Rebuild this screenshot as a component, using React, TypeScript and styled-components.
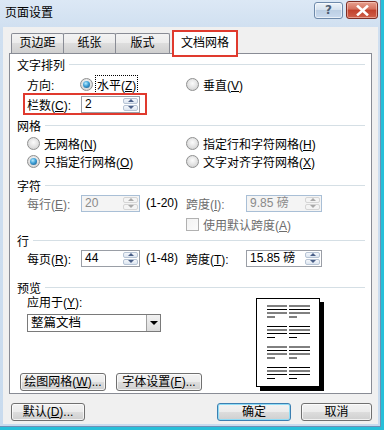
import React from 'react';
import styled, { createGlobalStyle } from 'styled-components';

const GlobalStyle = createGlobalStyle`
    body {
        margin: 0;
        background: #27bfd9;
        font-family: "Liberation Sans", "Noto Sans CJK SC", sans-serif;
        font-size: 12px;
        color: #000;
    }
`;

export default function App() {
    return (<>
        <GlobalStyle />
        <Window>
            <TitleBar>
                <Title>页面设置</Title>
                <Caption>
                    <HelpButton>?</HelpButton>
                    <CloseButton>
                        <svg width="13" height="11" viewBox="0 0 13 11">
                            <path d="M2 1.5 L11 9.5 M11 1.5 L2 9.5" stroke="#fff" strokeWidth="2.6" strokeLinecap="square" />
                        </svg>
                    </CloseButton>
                </Caption>
            </TitleBar>

            <Client>
                <TabRow>
                    <Tab $w={53}>页边距</Tab>
                    <Tab $w={53}>纸张</Tab>
                    <Tab $w={55}>版式</Tab>
                    <ActiveTab>文档网格</ActiveTab>
                </TabRow>

                <Panel>
                    <Header $mt={2}>文字排列</Header>
                    <Rows>
                        <Row $mt={3}>
                            <Label>方向:</Label>
                            <Span2><Radio $checked /><Focus>水平(<u>Z</u>)</Focus></Span2>
                            <Right><Radio /><span>垂直(<u>V</u>)</span></Right>
                        </Row>
                        <Marked>
                            <Label>栏数(<u>C</u>):</Label>
                            <SpinBox value="2" />
                        </Marked>
                    </Rows>

                    <Header $mt={2}>网格</Header>
                    <Rows>
                        <Row $mt={1}>
                            <Left><Radio /><span>无网格(<u>N</u>)</span></Left>
                            <Right><Radio /><span>指定行和字符网格(<u>H</u>)</span></Right>
                        </Row>
                        <Row>
                            <Left><Radio $checked /><span>只指定行网格(<u>O</u>)</span></Left>
                            <Right><Radio /><span>文字对齐字符网格(<u>X</u>)</span></Right>
                        </Row>
                    </Rows>

                    <Header $mt={7}>字符</Header>
                    <Rows>
                        <Row $mt={1}>
                            <Label $off>每行(<u>E</u>):</Label>
                            <SpinBox value="20" disabled />
                            <Range>(1-20)</Range>
                            <Label $off>跨度(<u>I</u>):</Label>
                            <SpinBox value="9.85 磅" disabled wide />
                        </Row>
                        <CheckRow>
                            <Right $off><Check /><span>使用默认跨度(<u>A</u>)</span></Right>
                        </CheckRow>
                    </Rows>

                    <Header $mt={0}>行</Header>
                    <Rows>
                        <Row $mt={1}>
                            <Label>每页(<u>R</u>):</Label>
                            <SpinBox value="44" />
                            <Range>(1-48)</Range>
                            <Label>跨度(<u>T</u>):</Label>
                            <SpinBox value="15.85 磅" wide />
                        </Row>
                    </Rows>

                    <Header $mt={12}>预览</Header>
                    <PreviewBody>
                        <PreviewLeft>
                            <ApplyLabel>应用于(<u>Y</u>):</ApplyLabel>
                            <Select>
                                <SelectText>整篇文档</SelectText>
                                <DropButton><DownArrow /></DropButton>
                            </Select>
                            <PanelButtons>
                                <Button $w={86}>绘图网格(<u>W</u>)...</Button>
                                <Button $w={86}>字体设置(<u>F</u>)...</Button>
                            </PanelButtons>
                        </PreviewLeft>
                        <PagePreview />
                    </PreviewBody>
                </Panel>

                <Footer>
                    <Button $w={74}>默认(<u>D</u>)...</Button>
                    <FooterRight>
                        <Button $w={74} $default>确定</Button>
                        <Button $w={71}>取消</Button>
                    </FooterRight>
                </Footer>
            </Client>
        </Window>
    </>);
}

function SpinBox({ value, disabled, wide }: { value: string; disabled?: boolean; wide?: boolean }) {
    return (<Input $off={disabled} $w={wide ? 76 : 59}>
        <InputText>{value}</InputText>
        <Spin>
            <SpinHalf $off={disabled}><Tri $up $off={disabled} /></SpinHalf>
            <SpinHalf $off={disabled}><Tri $off={disabled} /></SpinHalf>
        </Spin>
    </Input>);
}

function PagePreview() {
    const groups = [8, 28.5, 49, 69.5];
    const lines: React.ReactNode[] = [];
    groups.forEach((g, i) => {
        [0, 3.5, 7].forEach((d, j) => {
            lines.push(<line key={`a${i}${j}`} x1="11" x2="31" y1={g + d} y2={g + d} />);
            lines.push(<line key={`b${i}${j}`} x1="33" x2="54" y1={g + d} y2={g + d} />);
        });
        lines.push(<line key={`c${i}`} x1="11" x2="19" y1={g + 11} y2={g + 11} />);
        lines.push(<line key={`d${i}`} x1="33" x2="41" y1={g + 11} y2={g + 11} />);
    });
    return (<PageSvg width="68" height="93" viewBox="0 0 68 93">
        <rect x="4" y="4" width="64" height="89" fill="#000" />
        <rect x="0.5" y="0.5" width="63" height="88" fill="#fff" stroke="#000" />
        <g stroke="#000" strokeWidth="1">{lines}</g>
    </PageSvg>);
}

const Window = styled.div`
    width: 381px;
    height: 427px;
    display: flex;
    flex-direction: column;
    background: linear-gradient(#dce8f5, #cfdff0 30px, #c9dbee);
    box-shadow: inset -1px -1px 0 #6f8fb5;
    box-sizing: border-box;
`;

const TitleBar = styled.div`
    height: 27px;
    display: flex;
    justify-content: space-between;
    align-items: flex-start;
    padding: 0 3px 0 5px;
    flex-shrink: 0;
`;

const Title = styled.div`
    margin-top: 5px;
    font-size: 12px;
    line-height: 16px;
`;

const Caption = styled.div`
    display: flex;
    gap: 3px;
    margin-top: 1px;
`;

const HelpButton = styled.div`
    width: 29px;
    height: 17px;
    margin-top: 1px;
    box-sizing: border-box;
    border: 1px solid #6e8aab;
    border-radius: 3px;
    background: linear-gradient(#eef3f9, #d6e2ef 45%, #bccfe4 50%, #c9daee);
    box-shadow: inset 0 0 0 1px rgba(255,255,255,0.6);
    color: #4f5f73;
    font-family: "DejaVu Sans", sans-serif;
    font-weight: bold;
    font-size: 12px;
    line-height: 15px;
    text-align: center;
`;

const CloseButton = styled.div`
    width: 32px;
    height: 18px;
    box-sizing: border-box;
    border: 1px solid #7d2d24;
    border-radius: 3px;
    background: linear-gradient(#e7a08f, #d4705d 45%, #c1402b 50%, #d0604a);
    box-shadow: inset 0 0 0 1px rgba(255,220,210,0.5);
    display: flex;
    align-items: center;
    justify-content: center;
`;

const Client = styled.div`
    flex: 1;
    margin: 0 3px 3px 3px;
    background: #f0f0f0;
    display: flex;
    flex-direction: column;
    padding: 3px 6px 0 6px;
`;

const TabRow = styled.div`
    display: flex;
    align-items: flex-end;
    padding-left: 2px;
    height: 23px;
`;

const Tab = styled.div<{ $w: number }>`
    width: ${p => p.$w}px;
    height: 20px;
    margin-right: -1px;
    box-sizing: border-box;
    border: 1px solid #898c95;
    border-bottom: none;
    border-radius: 2px 2px 0 0;
    background: linear-gradient(#f3f3f3, #ebebeb 50%, #dddddd 50%, #cfcfcf);
    text-align: center;
    line-height: 19px;
`;

const ActiveTab = styled.div`
    position: relative;
    z-index: 1;
    width: 66px;
    height: 27px;
    margin-left: 3px;
    margin-bottom: -4px;
    box-sizing: border-box;
    border: 2px solid #e03a2e;
    background: #fff;
    font-size: 12px;
    line-height: 22px;
    text-align: center;
`;

const Panel = styled.div`
    flex-shrink: 0;
    height: 341px;
    box-sizing: border-box;
    border: 1px solid #898c95;
    background: #fff;
    padding: 0 6px 6px 7px;
    display: flex;
    flex-direction: column;
`;

const Header = styled.div<{ $mt: number }>`
    display: flex;
    align-items: center;
    gap: 4px;
    height: 16px;
    margin-top: ${p => p.$mt}px;
    &::after {
        content: '';
        flex: 1;
        height: 1px;
        background: #d5dfe5;
    }
`;

const Rows = styled.div`
    display: flex;
    flex-direction: column;
    padding-left: 10px;
`;

const Row = styled.div<{ $mt?: number }>`
    display: grid;
    grid-template-columns: 54px 65px 40px 60px 76px;
    align-items: center;
    height: 18px;
    margin-top: ${p => p.$mt ?? 0}px;
`;

const CheckRow = styled(Row)`
    height: 16px;
    margin-top: 4px;
`;

const Marked = styled.div`
    display: grid;
    grid-template-columns: 54px 59px;
    align-items: center;
    align-self: flex-start;
    height: 18px;
    margin-left: -4px;
    padding: 0 5px 0 2px;
    border: 2px solid #e03a2e;
`;

const Label = styled.div<{ $off?: boolean }>`
    color: ${p => p.$off ? '#6d6d6d' : '#000'};
    white-space: nowrap;
`;

const Range = styled.div`
    white-space: nowrap;
`;

const Choice = styled.div<{ $off?: boolean }>`
    display: flex;
    align-items: center;
    gap: 4px;
    white-space: nowrap;
    color: ${p => p.$off ? '#6d6d6d' : '#000'};
`;

const Left = styled(Choice)`
    grid-column: 1 / span 3;
`;

const Span2 = styled(Choice)`
    grid-column: 2 / span 2;
    margin-left: -1px;
    gap: 3px;
`;

const Right = styled(Choice)`
    grid-column: 4 / span 2;
`;

const Focus = styled.span`
    outline: 1px dotted #000;
    padding: 0 1px;
`;

const Radio = styled.span<{ $checked?: boolean }>`
    width: 13px;
    height: 13px;
    box-sizing: border-box;
    border-radius: 50%;
    border: 1px solid #8f9090;
    background: radial-gradient(circle at 50% 40%, #fbfbfb 0, #e6e6e6 45%, #c9c9c9 100%);
    display: flex;
    align-items: center;
    justify-content: center;
    flex-shrink: 0;
    &::after {
        content: '';
        display: ${p => p.$checked ? 'block' : 'none'};
        width: 7px;
        height: 7px;
        border-radius: 50%;
        background: radial-gradient(circle at 40% 35%, #b8ecff 0, #3d9fd6 45%, #17507f 100%);
    }
`;

const Check = styled.span`
    width: 13px;
    height: 13px;
    box-sizing: border-box;
    border: 1px solid #b1b1b1;
    background: linear-gradient(135deg, #f2f2f2, #fbfbfb);
    flex-shrink: 0;
`;

const Input = styled.div<{ $off?: boolean; $w: number }>`
    width: ${p => p.$w}px;
    height: 17px;
    box-sizing: border-box;
    display: flex;
    align-items: stretch;
    border: 1px solid ${p => p.$off ? '#a9bfd6' : '#9a9ea6'};
    background: ${p => p.$off ? '#f4f4f4' : '#fff'};
    color: ${p => p.$off ? '#8a8a8a' : '#000'};
`;

const InputText = styled.div`
    flex: 1;
    padding-left: 3px;
    line-height: 15px;
    white-space: nowrap;
`;

const Spin = styled.div`
    width: 15px;
    display: flex;
    flex-direction: column;
    gap: 1px;
    padding: 1px;
`;

const SpinHalf = styled.div<{ $off?: boolean }>`
    flex: 1;
    box-sizing: border-box;
    border: 1px solid ${p => p.$off ? '#d5d5d5' : '#b7c4d5'};
    border-radius: 2px;
    background: ${p => p.$off ? '#f4f4f4' : 'linear-gradient(#f4f7fb, #dde6f1)'};
    display: flex;
    align-items: center;
    justify-content: center;
`;

const Tri = styled.span<{ $up?: boolean; $off?: boolean }>`
    width: 0;
    height: 0;
    border-left: 3px solid transparent;
    border-right: 3px solid transparent;
    ${p => p.$up ? 'border-bottom' : 'border-top'}: 3px solid ${p => p.$off ? '#a8a8a8' : '#4a5f87'};
`;

const PreviewBody = styled.div`
    flex: 1;
    display: flex;
    padding-left: 3px;
`;

const PreviewLeft = styled.div`
    width: 236px;
    display: flex;
    flex-direction: column;
`;

const ApplyLabel = styled.div`
    margin: 1px 0 0 7px;
    height: 14px;
    line-height: 14px;
`;

const Select = styled.div`
    margin: 4px 0 0 7px;
    width: 134px;
    height: 18px;
    box-sizing: border-box;
    border: 1px solid #7a7a7a;
    background: #fff;
    display: flex;
`;

const SelectText = styled.div`
    flex: 1;
    padding-left: 3px;
    line-height: 16px;
    font-size: 12.5px;
`;

const DropButton = styled.div`
    width: 14px;
    box-sizing: border-box;
    border-left: 1px solid #a0a0a0;
    background: linear-gradient(#f2f2f2, #dcdcdc);
    display: flex;
    align-items: center;
    justify-content: center;
`;

const DownArrow = styled.span`
    width: 0;
    height: 0;
    border-left: 4px solid transparent;
    border-right: 4px solid transparent;
    border-top: 4px solid #000;
`;

const PanelButtons = styled.div`
    margin-top: auto;
    display: flex;
    gap: 10px;
`;

const Button = styled.div<{ $w: number; $default?: boolean }>`
    width: ${p => p.$w}px;
    height: 18px;
    box-sizing: border-box;
    border: 1px solid ${p => p.$default ? '#3c7fb1' : '#707070'};
    border-radius: 3px;
    background: linear-gradient(#f2f2f2, #ebebeb 50%, #dddddd 50%, #cfcfcf);
    box-shadow: inset 0 0 0 1px ${p => p.$default ? '#8fdcf6' : 'rgba(255,255,255,0.7)'};
    text-align: center;
    line-height: 16px;
    white-space: nowrap;
`;

const PageSvg = styled.svg`
    margin: 3px 0 0 0;
    flex-shrink: 0;
`;

const Footer = styled.div`
    display: flex;
    justify-content: space-between;
    margin-top: 9px;
    padding-left: 2px;
`;

const FooterRight = styled.div`
    display: flex;
    gap: 10px;
`;
